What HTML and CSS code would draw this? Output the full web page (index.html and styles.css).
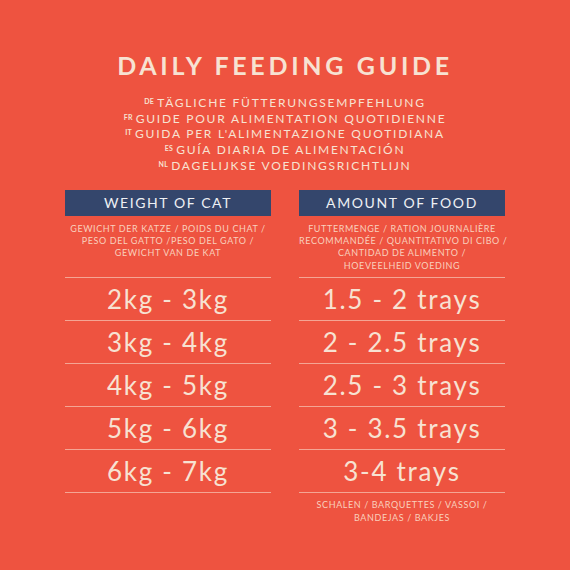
FILE: index.html
```html
<!DOCTYPE html>
<html lang="en">
<head>
  <meta charset="UTF-8">
  <meta name="viewport" content="width=device-width, initial-scale=1.0">
  <title>Daily Feeding Guide</title>
  <link rel="stylesheet" href="styles.css">
</head>
<body>
  <div class="page">
    <!-- Title -->
    <h1 class="title">Daily Feeding Guide</h1>
    <div class="translations">
      <p><span class="lang">DE</span>TÄGLICHE FÜTTERUNGSEMPFEHLUNG</p>
      <p><span class="lang">FR</span>GUIDE POUR ALIMENTATION QUOTIDIENNE</p>
      <p><span class="lang">IT</span>GUIDA PER L'ALIMENTAZIONE QUOTIDIANA</p>
      <p><span class="lang">ES</span>GUÍA DIARIA DE ALIMENTACIÓN</p>
      <p><span class="lang">NL</span>DAGELIJKSE VOEDINGSRICHTLIJN</p>
    </div>

    <!-- Table -->
    <div class="guide">
      <div class="head">WEIGHT OF CAT</div>
      <div class="head">AMOUNT OF FOOD</div>

      <div class="note">GEWICHT DER KATZE / POIDS DU CHAT /<br>PESO DEL GATTO /PESO DEL GATO /<br>GEWICHT VAN DE KAT</div>
      <div class="note">FUTTERMENGE / RATION JOURNALIÈRE<br>RECOMMANDÉE / QUANTITATIVO DI CIBO /<br>CANTIDAD DE ALIMENTO /<br>HOEVEELHEID VOEDING</div>

      <div class="cell">2kg - 3kg</div>
      <div class="cell">1.5 - 2 trays</div>
      <div class="cell">3kg - 4kg</div>
      <div class="cell">2 - 2.5 trays</div>
      <div class="cell">4kg - 5kg</div>
      <div class="cell">2.5 - 3 trays</div>
      <div class="cell">5kg - 6kg</div>
      <div class="cell">3 - 3.5 trays</div>
      <div class="cell last">6kg - 7kg</div>
      <div class="cell last">3-4 trays</div>

      <div></div>
      <div class="note foot">SCHALEN / BARQUETTES / VASSOI /<br>BANDEJAS / BAKJES</div>
    </div>
  </div>
</body>
</html>
```

FILE: styles.css
```css
/* General styles */
body {
  margin: 0;
  background-color: #ee5340;
  font-family: Lato, "Open Sans", sans-serif;
  color: #f7e2d2;
}

.page {
  width: 440px;
  margin: 0 auto;
  padding-top: 50px;
  text-align: center;
}

/* Title */
.title {
  margin: 0;
  font-size: 25px;
  line-height: 30px;
  font-weight: 700;
  letter-spacing: 3.7px;
  text-transform: uppercase;
}

.translations {
  margin-top: 15px;
}

.translations p {
  margin: 0;
  font-size: 12px;
  line-height: 15.7px;
  letter-spacing: 1.75px;
}

.lang {
  font-size: 7px;
  font-weight: 700;
  line-height: 0;
  letter-spacing: 0.3px;
  margin-right: 3px;
  vertical-align: 3px;
}

/* Table */
.guide {
  display: grid;
  grid-template-columns: 206px 206px;
  column-gap: 28px;
  margin-top: 16px;
}

.head {
  height: 26px;
  line-height: 26px;
  background-color: #34466c;
  color: #eef0f4;
  font-size: 14px;
  letter-spacing: 1.6px;
}

.note {
  padding: 7px 0 5px;
  font-size: 9px;
  line-height: 12.4px;
  letter-spacing: 0.6px;
  white-space: nowrap;
  color: #f9d0bd;
}

.cell {
  height: 42px;
  line-height: 42px;
  border-top: 1px solid #f4a594;
  font-size: 26px;
  letter-spacing: 1.7px;
}

.cell.last {
  border-bottom: 1px solid #f4a594;
}

.foot {
  padding-top: 6px;
}
```
